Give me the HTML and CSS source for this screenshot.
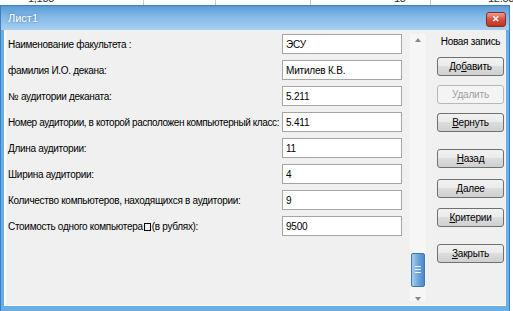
FILE: index.html
```html
<!DOCTYPE html>
<html>
<head>
	<title>Лист1</title>
	<link rel="stylesheet" href="styles.css">
</head>
<body>
	<div class="sheet">
		<span class="cell c1">1,183</span>
		<span class="line l1"></span>
		<span class="line l2"></span>
		<span class="line l3"></span>
		<span class="cell c2">18</span>
		<span class="line l4"></span>
		<span class="cell c3">12.53</span>
	</div>
	<main class="win">
		<header class="title">
			<span class="caption">Лист1</span>
			<span class="close">&#x2715;</span>
		</header>
		<section class="client">
			<div class="fields">
				<div class="row"><label>Наименование факультета :</label><input type="text" value="ЭСУ"></div>
				<div class="row"><label>фамилия И.О. декана:</label><input type="text" value="Митилев К.В."></div>
				<div class="row"><label>№ аудитории деканата:</label><input type="text" value="5.211"></div>
				<div class="row"><label>Номер аудитории, в которой расположен компьютерный класс:</label><input type="text" value="5.411"></div>
				<div class="row"><label>Длина аудитории:</label><input type="text" value="11"></div>
				<div class="row"><label>Ширина аудитории:</label><input type="text" value="4"></div>
				<div class="row"><label>Количество компьютеров, находящихся в аудитории:</label><input type="text" value="9"></div>
				<div class="row"><label>Стоимость одного компьютера<span class="box"></span>(в рублях):</label><input type="text" value="9500"></div>
			</div>
			<div class="scroll">
				<span class="arrow up"></span>
				<span class="thumb"><span class="grip"></span></span>
				<span class="arrow down"></span>
			</div>
			<div class="side">
				<div class="rec">Новая запись</div>
				<button class="btn">До<u>б</u>авить</button>
				<button class="btn off g1">Удалить</button>
				<button class="btn g1"><u>В</u>ернуть</button>
				<button class="btn g2"><u>Н</u>азад</button>
				<button class="btn g3"><u>Д</u>алее</button>
				<button class="btn g4"><u>К</u>ритерии</button>
				<button class="btn g2"><u>З</u>акрыть</button>
			</div>
		</section>
	</main>
</body>
</html>
```
FILE: styles.css
```css
*{
	margin: 0;
	padding: 0;
	box-sizing: border-box;
}
body{
	width: 513px;
	height: 311px;
	overflow: hidden;
	background: #fff;
	font-family: "Liberation Sans", Arial, sans-serif;
	font-size: 10px;
	letter-spacing: -0.3px;
	color: #000;
}
.sheet{
	position: relative;
	height: 5px;
	overflow: hidden;
	background: #fff;
}
.cell{
	position: absolute;
	top: -8px;
	font-size: 11px;
	color: #333;
}
.c1{ left: 28px; }
.c2{ left: 394px; }
.c3{ left: 488px; }
.line{
	position: absolute;
	top: 0;
	width: 1px;
	height: 5px;
	background: #c8c8c8;
}
.l1{ left: 143px; }
.l2{ left: 215px; }
.l3{ left: 310px; }
.l4{ left: 430px; }
.win{
	width: 510px;
	height: 306px;
	display: flex;
	flex-direction: column;
	background: #6aaee6;
	border: 1px solid #3d7fc0;
	border-bottom: none;
	padding: 0 3px 5px 3px;
}
.title{
	height: 24px;
	display: flex;
	align-items: center;
	justify-content: space-between;
	background: linear-gradient(#5a9bd6, #80b6e6 40%, #a9d0f1);
	margin: 0 -3px;
	padding-left: 7px;
	padding-right: 3px;
}
.caption{
	color: #fff;
	font-size: 11px;
	letter-spacing: 0;
	text-shadow: 0 0 3px #3b74b0;
}
.close{
	width: 20px;
	height: 15px;
	margin-top: 2px;
	border: 1px solid #8a2a22;
	border-radius: 3px;
	background: linear-gradient(#e9a294, #d2503c 50%, #c2341f);
	color: #fff;
	font-size: 9px;
	font-weight: bold;
	line-height: 13px;
	text-align: center;
}
.client{
	flex: 1;
	display: flex;
	background: #f0f0f0;
	border-left: 2px solid #fbfbfb;
	border-bottom: 1px solid #fbfbfb;
	padding: 4px 0 0 2px;
}
.fields{
	width: 394px;
}
.row{
	display: flex;
	align-items: center;
	height: 20px;
	margin-bottom: 6px;
}
.row label{
	flex: 1;
	min-width: 0;
	white-space: nowrap;
}
.row:nth-child(4) label{
	letter-spacing: -0.4px;
}
.row input{
	flex-shrink: 0;
	width: 120px;
	height: 20px;
	border: 1px solid #a5a5a5;
	background: #fff;
	font-family: "Liberation Sans", Arial, sans-serif;
	font-size: 10px;
	letter-spacing: -0.2px;
	padding: 0 3px;
	outline: none;
}
.box{
	display: inline-block;
	width: 7px;
	height: 8px;
	border: 1px solid #000;
	vertical-align: -1px;
	margin: 0 1px;
}
.scroll{
	position: relative;
	width: 16px;
	margin-left: 8px;
	margin-bottom: 4px;
	background: #f6f6f6;
}
.arrow{
	position: absolute;
	left: 5px;
	width: 0;
	height: 0;
	border-left: 3px solid transparent;
	border-right: 3px solid transparent;
}
.up{
	top: 4px;
	border-bottom: 4px solid #8a8a8a;
}
.down{
	bottom: 0px;
	border-top: 4px solid #8a8a8a;
}
.thumb{
	position: absolute;
	left: 1px;
	top: 219px;
	width: 14px;
	height: 34px;
	border: 1px solid #3c76b4;
	border-radius: 2px;
	background: linear-gradient(90deg, #a9cdf0, #6fa6dc 50%, #4d88c9);
}
.grip{
	position: absolute;
	left: 3px;
	top: 12px;
	width: 6px;
	height: 7px;
	border-top: 1px solid #e8f2fc;
	border-bottom: 1px solid #e8f2fc;
}
.grip:after{
	content: "";
	position: absolute;
	left: 0;
	top: 2px;
	width: 6px;
	height: 1px;
	background: #e8f2fc;
}
.side{
	display: flex;
	flex-direction: column;
	margin-left: 11px;
	width: 67px;
}
.rec{
	text-align: center;
	white-space: nowrap;
	height: 14px;
	margin-top: 2px;
	margin-bottom: 7px;
}
.btn{
	height: 19px;
	width: 67px;
	border: 1px solid #707070;
	border-radius: 3px;
	background: linear-gradient(#f2f2f2, #ebebeb 45%, #dddddd 50%, #cfcfcf);
	font-family: "Liberation Sans", Arial, sans-serif;
	font-size: 10px;
	letter-spacing: -0.2px;
	color: #000;
}
.btn.off{
	border-color: #b8b8b8;
	background: #f4f4f4;
	color: #a0a0a0;
}
.g1{ margin-top: 9px; }
.g2{ margin-top: 17px; }
.g3{ margin-top: 11px; }
.g4{ margin-top: 10px; }
```
